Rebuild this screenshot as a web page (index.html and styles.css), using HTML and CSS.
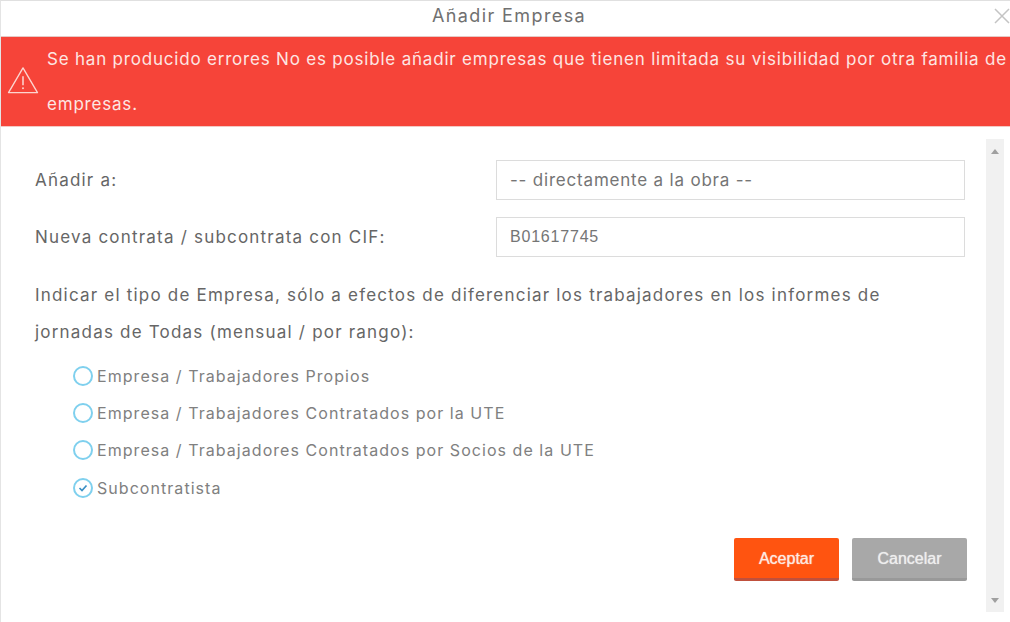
FILE: index.html
```html
<!DOCTYPE html>
<html lang="es">
<head>
<meta charset="utf-8">
<title>Añadir Empresa</title>
<link rel="stylesheet" href="styles.css">
</head>
<body>
<div class="dialog">
  <header class="title-bar">
    <h1 class="title">Añadir Empresa</h1>
    <button class="close" aria-label="Cerrar">
      <svg width="16" height="16" viewBox="0 0 16 16"><path d="M1 1L15 15M15 1L1 15" stroke="#c4c4c4" stroke-width="1.5" fill="none"/></svg>
    </button>
  </header>
  <div class="alert">
    <svg class="alert-icon" width="32" height="28" viewBox="0 0 33 29"><path d="M16.5 2L31.5 27.5H1.5Z" fill="none" stroke="#fcd5d0" stroke-width="1.4" stroke-linejoin="round"/><path d="M16.5 10.5V20" stroke="#fcd5d0" stroke-width="1.6"/><circle cx="16.5" cy="23" r="1" fill="#fcd5d0"/></svg>
    <p class="alert-text">Se han producido errores No es posible añadir empresas que tienen limitada su visibilidad por otra familia de empresas.</p>
  </div>
  <div class="body">
    <div class="content">
      <div class="field">
        <label class="field-label">Añadir a:</label>
        <div class="input select-like">-- directamente a la obra --</div>
      </div>
      <div class="field">
        <label class="field-label">Nueva contrata / subcontrata con CIF:</label>
        <div class="input cif">B01617745</div>
      </div>
      <p class="hint">Indicar el tipo de Empresa, sólo a efectos de diferenciar los trabajadores en los informes de jornadas de Todas (mensual / por rango):</p>
      <ul class="options">
        <li class="option"><span class="radio"></span>Empresa / Trabajadores Propios</li>
        <li class="option"><span class="radio"></span>Empresa / Trabajadores Contratados por la UTE</li>
        <li class="option"><span class="radio"></span>Empresa / Trabajadores Contratados por Socios de la UTE</li>
        <li class="option"><span class="radio"><svg width="12" height="10" viewBox="0 0 12 10"><path d="M2.5 5L5 7.5L9.5 2.5" fill="none" stroke="#3a8fc4" stroke-width="1.7"/></svg></span>Subcontratista</li>
      </ul>
      <div class="actions">
        <button class="btn btn-primary">Aceptar</button>
        <button class="btn btn-muted">Cancelar</button>
      </div>
    </div>
    <div class="scrollbar">
      <span class="arrow-up"></span>
      <span class="arrow-down"></span>
    </div>
  </div>
</div>
</body>
</html>
```
FILE: styles.css
```css
html, body { margin: 0; padding: 0; background: #fff; }
body { width: 1010px; height: 622px; overflow: hidden; font-family: Inter, "Open Sans", sans-serif; }
.dialog { height: 622px; box-sizing: border-box; border-top: 1px solid #e0e0e0; border-left: 1px solid #e4e4e4; display: flex; flex-direction: column; }
.title-bar { height: 35px; display: flex; align-items: flex-start; justify-content: center; position: relative; border-bottom: 1px solid #e6c9c5; }
.title { margin: 4px 0 0 7px; font-size: 18px; line-height: 22px; font-weight: 400; color: #707070; letter-spacing: 1.4px; }
.close { position: absolute; right: 0; top: 7px; padding: 0; border: 0; background: none; width: 17px; height: 16px; }
.alert { height: 89px; background: #f64439; display: flex; align-items: center; border-bottom: 1px solid #f3c9c4; }
.alert-icon { margin-left: 6px; flex: none; margin-top: -4px; }
.alert-text { margin: 0 0 0 8px; color: #fde6e3; font-size: 17px; line-height: 45px; letter-spacing: 0.8px; width: 963px; }
.body { flex: 1; display: flex; padding-top: 12px; }
.content { width: 985px; box-sizing: border-box; padding: 0 21px 0 34px; color: #666; }
.field { display: flex; align-items: center; justify-content: space-between; height: 40px; margin-top: 21px; margin-bottom: 17px; }
.field + .field { margin-top: 0; }
.field-label { font-size: 17px; letter-spacing: 1.2px; }
.input { width: 469px; height: 40px; box-sizing: border-box; border: 1px solid #dcdcdc; padding-left: 13px; display: flex; align-items: center; color: #757575; font-size: 17px; letter-spacing: 0.8px; }
.cif { font-size: 16px; font-family: "Liberation Sans", sans-serif; letter-spacing: 0.8px; }
.hint { margin: 0; font-size: 17px; line-height: 37px; letter-spacing: 1.2px; padding-top: 3px; }
.options { list-style: none; margin: 6px 0 0 38px; padding: 0; }
.option { height: 37.4px; display: flex; align-items: center; font-size: 16px; color: #808080; letter-spacing: 1.05px; }
.radio { width: 20px; height: 20px; box-sizing: border-box; border: 2px solid #7fd0ee; border-radius: 50%; margin-right: 4px; display: flex; align-items: center; justify-content: center; }
.actions { display: flex; justify-content: flex-end; gap: 13px; margin-top: 31px; margin-right: -2px; }
.btn { height: 43px; border: 0; border-radius: 2px; color: #fff; font-family: "Liberation Sans", sans-serif; font-size: 16px; padding: 2px 0 0; text-shadow: 0 0 1px currentColor; }
.btn-primary { width: 105px; background: #ff5410; border-bottom: 3px solid #c0503c; color: #fde9e0; }
.btn-muted { width: 115px; background: #a8a8a8; border-bottom: 3px solid #999; color: #eee; }
.scrollbar { width: 18px; height: 473px; background: #f1f1f1; position: relative; }
.arrow-up, .arrow-down { position: absolute; left: 5px; width: 0; height: 0; border-left: 4px solid transparent; border-right: 4px solid transparent; }
.arrow-up { top: 10px; border-bottom: 5px solid #a0a0a0; }
.arrow-down { bottom: 9px; border-top: 5px solid #a0a0a0; }
```
